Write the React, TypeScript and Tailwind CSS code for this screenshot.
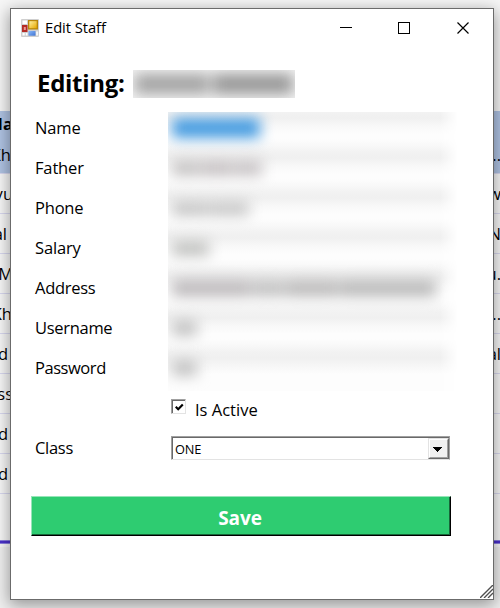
import React from 'react';

const backdropRows = [
  { left: 'Kh', right: '...' },
  { left: 'yu', right: 'w' },
  { left: 'al', right: 'N' },
  { left: 'M', right: 'u.' },
  { left: 'Kh', right: '...' },
  { left: 'd', right: 'al' },
  { left: 'ss', right: '' },
  { left: 'd', right: '' },
  { left: 'd', right: '' },
];

const leftInset = [
  'pr-[2px]', 'pr-0', 'pr-[6px]', 'pr-0', 'pr-[1px]', 'pr-[5px]', 'pr-0', 'pr-[5px]', 'pr-[5px]',
];

function Backdrop() {
  return (
    <div className="h-full w-full bg-[#f0f0f0] text-[16.5px] text-black">
      <div className="h-[111px] bg-[#f6f6f6]" />
      <div className="flex h-[25px] items-center justify-between bg-[#b0c4e4] pt-[2px] font-bold">
        <div className="flex w-[13px] justify-end overflow-hidden">Na</div>
      </div>
      {backdropRows.map((row, i) => (
        <div
          key={i}
          className={`flex items-center justify-between border-b border-[#d9d9f0] pt-[2px] ${
            i === 0 ? 'h-[38px] bg-[#b0c4e4]' : 'h-[40px] bg-[#f8f8f8]'
          }`}
        >
          <div className={`flex w-[13px] justify-end overflow-hidden ${leftInset[i]}`}>{row.left}</div>
          <div className="-mr-px flex w-[11px] justify-end overflow-hidden">{row.right}</div>
        </div>
      ))}
      <div className="h-[46px] bg-[#f8f8f8]" />
      <div className="h-[4px] border-y border-[#8c80e0] bg-[#4a30cc]" />
      <div className="h-[3px] bg-[#f8f8f8]" />
    </div>
  );
}

function AppIcon() {
  return (
    <svg width="18" height="18" viewBox="0 0 18 18">
      <defs>
        <linearGradient id="gold" x1="0" y1="0" x2="1" y2="1">
          <stop offset="0" stopColor="#fff0a0" />
          <stop offset="1" stopColor="#e6a800" />
        </linearGradient>
        <linearGradient id="sky" x1="0" y1="0" x2="1" y2="1">
          <stop offset="0" stopColor="#8ab8f8" />
          <stop offset="1" stopColor="#3f74d4" />
        </linearGradient>
      </defs>
      <rect width="18" height="18" rx="1" fill="#cfcfcf" />
      <rect x="1.5" y="1.5" width="4.5" height="3.5" fill="#fff" />
      <rect x="1.5" y="14" width="2.2" height="2.5" fill="#fff" />
      <rect x="4.7" y="14" width="1.8" height="2.5" fill="#fff" />
      <rect x="15.3" y="12.5" width="1.5" height="4" fill="#fff" />
      <rect x="1" y="6" width="5.5" height="7" fill="#b52c26" />
      <rect x="2.8" y="8" width="2" height="3" fill="#e99a92" />
      <rect x="7" y="1" width="10" height="9.5" fill="#b8860b" />
      <rect x="8.3" y="2.2" width="7.4" height="7" fill="url(#gold)" />
      <rect x="7.5" y="12" width="7" height="4.7" fill="url(#sky)" />
    </svg>
  );
}

function TitleBar() {
  return (
    <div className="flex h-[37px] items-center pl-[10px]">
      <AppIcon />
      <span className="ml-[6px] text-[14.8px] tracking-[-0.08px]">Edit Staff</span>
      <svg className="ml-auto mr-[23px]" width="130" height="12" viewBox="0 0 130 12" fill="none" stroke="#000" shapeRendering="crispEdges">
        <path d="M0 5.5H12" />
        <path d="M58.5 0.5H69.5V11.5H58.5Z" />
        <path d="M117.5 0.5L128.5 11.5M128.5 0.5L117.5 11.5" shapeRendering="auto" strokeWidth="1.2" />
      </svg>
    </div>
  );
}

const fields = [
  { label: 'Name', tracking: 'tracking-[-0.15px]', blobs: ['w-[88px] h-[20px] bg-[#459be0]'] },
  { label: 'Father', tracking: 'tracking-[-0.15px]', blobs: ['w-[28px] h-[16px] bg-[#c6c4c4]', 'w-[31px] h-[16px] bg-[#c6c1c3]', 'w-[29px] h-[16px] bg-[#c8c4c6]'] },
  { label: 'Phone', tracking: 'tracking-[-0.2px]', blobs: ['w-[36px] h-[15px] bg-[#c6c6c6]', 'w-[40px] h-[15px] bg-[#c8c8c8]'] },
  { label: 'Salary', tracking: 'tracking-[-0.15px]', blobs: ['w-[37px] h-[15px] bg-[#c0c1bf]'] },
  { label: 'Address', tracking: 'tracking-[-0.3px]', blobs: ['w-[78px] h-[18px] bg-[#bfbcbe]', 'w-[34px] h-[18px] bg-[#c4c4c4]', 'w-[52px] h-[18px] bg-[#bebdbd]', 'w-[97px] h-[18px] bg-[#bcbcbc]'] },
  { label: 'Username', tracking: 'tracking-[-0.3px]', blobs: ['w-[25px] h-[16px] bg-[#c2c2c2]'] },
  { label: 'Password', tracking: 'tracking-[-0.45px]', blobs: ['w-[25px] h-[16px] bg-[#c2c2c2]'] },
];

function Fields() {
  return (
    <div className="flex h-[279px]">
      <div className="w-[133px]">
        {fields.map((f) => (
          <div key={f.label} className={`flex h-[40px] items-center pb-[7px] text-[16.5px] ${f.tracking}`}>
            {f.label}
          </div>
        ))}
      </div>
      <div className="w-[292px] overflow-hidden [mask-image:linear-gradient(to_right,black_272px,transparent_290px)]">
        {fields.map((f) => (
          <div
            key={f.label}
            className="flex h-[40px] items-start pl-[4px] pt-[5px] bg-[linear-gradient(to_bottom,#f2f2f2_0px,#f0f0f0_6px,#f8f8f8_14px,#fdfdfd_22px,#fdfdfd_27px,#f8f8f8_34px,#f2f2f2_40px)] last:bg-[linear-gradient(to_bottom,#f2f2f2_0px,#f0f0f0_6px,#fdfdfd_22px)]"
          >
            <div className="flex h-[22px] items-center gap-px blur-[7px]">
              {f.blobs.map((b, i) => (
                <div key={i} className={b} />
              ))}
            </div>
          </div>
        ))}
      </div>
    </div>
  );
}

function ClassSelect() {
  return (
    <div className="flex h-[24px] w-[279px] border-b border-l border-r border-t border-b-[#e3e3e3] border-l-[#a0a0a0] border-r-[#a0a0a0] border-t-[#a0a0a0]">
      <div className="flex flex-1 items-center justify-between border-l border-t border-[#696969] pl-[2px]">
        <span className="pt-[2px] text-[12.8px] tracking-[-0.2px]">ONE</span>
        <div className="flex h-[21px] w-[21px] border-b border-l border-r border-t border-b-[#696969] border-l-[#e3e3e3] border-r-[#696969] border-t-[#e3e3e3]">
          <div className="flex flex-1 items-center justify-center border-b border-l border-r border-t border-b-[#a0a0a0] border-l-white border-r-[#a0a0a0] border-t-white bg-[#f0f0f0] pr-[2px]">
            <svg width="9" height="5" viewBox="0 0 9 5" className="mt-[1px]" shapeRendering="crispEdges">
              <path d="M0 0H9V1H8V2H7V3H6V4H5V5H4V4H3V3H2V2H1V1H0Z" fill="#000" />
            </svg>
          </div>
        </div>
      </div>
    </div>
  );
}

function EditWindow() {
  return (
    <div className="absolute left-[10px] top-[8px] flex h-[592px] w-[484px] flex-col border border-[#6b6b6b] bg-white shadow-[0_4px_15px_1px_rgba(0,0,0,0.38)]">
      <TitleBar />
      <div className="flex h-[66px] items-start pl-[26px] pt-[21px]">
        <h1 className="w-[96px] text-[24px] font-bold leading-[32px] tracking-[-0.3px]">Editing:</h1>
        <div className="mt-[3px] flex h-[28px] w-[162px] items-center overflow-hidden bg-[#f3f3f3]">
          <div className="flex gap-[4px] pl-[2px] blur-[7px]">
            <div className="h-[20px] w-[74px] bg-[#a4a4a4]" />
            <div className="h-[20px] w-[80px] bg-[#989898]" />
          </div>
        </div>
      </div>
      <div className="pl-[24px]">
        <Fields />
        <div className="flex h-[38px] items-start pl-[136px] pt-[8px]">
          <div className="flex h-[15px] w-[15px] border-b border-l border-r border-t border-b-[#e3e3e3] border-l-[#a0a0a0] border-r-[#e3e3e3] border-t-[#a0a0a0]">
            <div className="flex flex-1 items-center justify-center border-l border-t border-[#696969]">
              <svg width="9" height="9" viewBox="0 0 9 9" fill="none" stroke="#000" strokeWidth="2.2">
                <path d="M0.7 3.7L3.2 6.2L7.8 1.5" />
              </svg>
            </div>
          </div>
          <span className="ml-[9px] text-[16.5px] leading-[22px] tracking-[0px]">Is Active</span>
        </div>
        <div className="flex h-[38px] items-center">
          <span className="w-[136px] text-[16.5px] tracking-[-0.3px]">Class</span>
          <ClassSelect />
        </div>
      </div>
      <button className="ml-[20px] mt-[29px] flex h-[40px] w-[420px] border-b border-l border-r border-t border-b-black border-l-[#96e5b8] border-r-black border-t-[#96e5b8]">
        <span className="flex h-full flex-1 items-center justify-center border-b border-r border-[#176639] bg-[#2ecc71] pr-[1px] pt-[5px] text-[19px] font-bold tracking-[-0.1px] text-white">
          Save
        </span>
      </button>
      <svg className="ml-auto mt-auto mb-[1px]" width="13" height="13" viewBox="0 0 13 13" stroke="#4f4f4f" strokeWidth="1.4">
        <path d="M0 13L13 0M4 13L13 4M8 13L13 8" />
      </svg>
    </div>
  );
}

export default function App() {
  return (
    <div className="relative h-[608px] w-[500px] overflow-hidden font-['Open_Sans','Noto_Sans',sans-serif] text-black">
      <Backdrop />
      <EditWindow />
    </div>
  );
}
